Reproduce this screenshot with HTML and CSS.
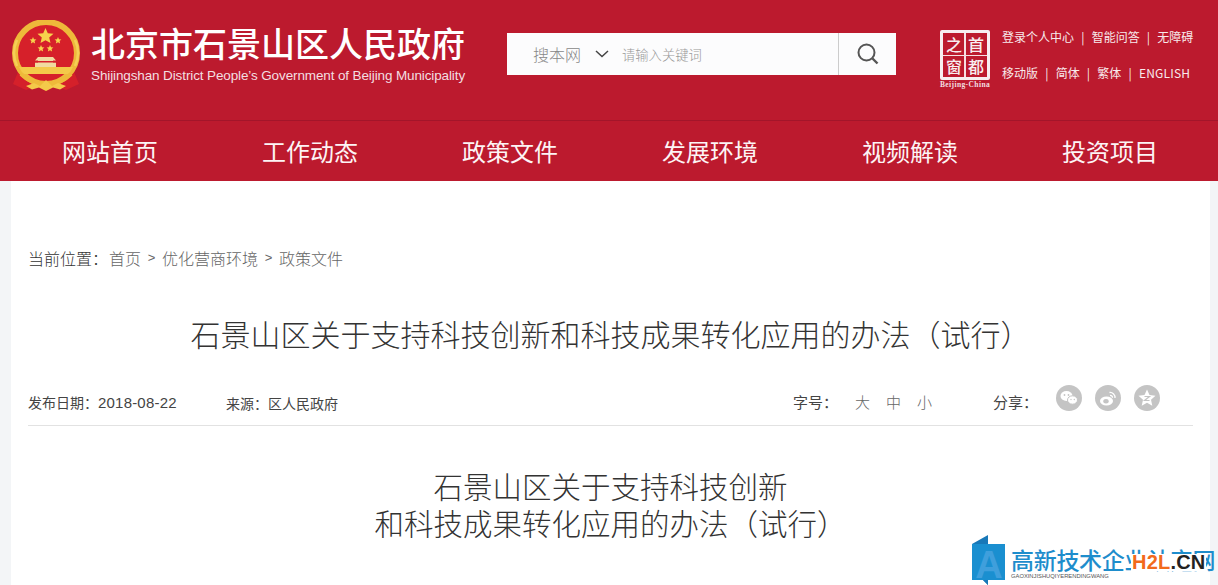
FILE: index.html
```html
<!DOCTYPE html>
<html lang="zh-CN">
<head>
<meta charset="utf-8">
<title>石景山区关于支持科技创新和科技成果转化应用的办法（试行）</title>
<link rel="stylesheet" href="styles.css">
</head>
<body>
<header class="band">
  <div class="masthead">
    <div class="brand">
      <svg class="emblem" viewBox="0 0 68 72" width="68" height="72" aria-hidden="true">
        <path d="M6 52 L1 64 L14 70 L24 66 L34 71 L44 66 L54 70 L67 64 L62 52 Z" fill="#d5202a"/>
        <circle cx="34" cy="33" r="31" fill="#d6202a" stroke="#eeb93a" stroke-width="6"/>
        <path d="M5 20a31 31 0 0 0 0 26" fill="none" stroke="#f5cf57" stroke-width="2.5"/>
        <path d="M63 20a31 31 0 0 1 0 26" fill="none" stroke="#f5cf57" stroke-width="2.500"/>
        <polygon points="33.5,8 35.8,13.2 41.5,13.8 37.2,17.5 38.5,23 33.5,20.2 28.5,23 29.8,17.5 25.5,13.8 31.2,13.2" fill="#f7d24c"/>
        <polygon points="21,17 22,19.3 24.4,19.5 22.6,21.1 23.1,23.5 21,22.3 18.9,23.5 19.4,21.1 17.6,19.5 20,19.3" fill="#f7d24c"/>
        <polygon points="46,17 47,19.3 49.4,19.5 47.6,21.1 48.1,23.5 46,22.3 43.9,23.5 44.4,21.1 42.6,19.5 45,19.3" fill="#f7d24c"/>
        <polygon points="29,25 30,27.3 32.4,27.5 30.6,29.1 31.1,31.5 29,30.3 26.9,31.5 27.4,29.1 25.6,27.5 28,27.3" fill="#f7d24c"/>
        <polygon points="38,25 39,27.3 41.4,27.5 39.600,29.1 40.1,31.5 38,30.3 35.9,31.5 36.4,29.1 34.6,27.5 37,27.3" fill="#f7d24c"/>
        <path d="M26 37h15l3 3.500h-3v2h3v4.500H23v-4.500h3v-2h-3z" fill="#f1dba0"/>
        <path d="M23 41h21v1.500H23z" fill="#d6202a"/>
        <path d="M7 47h54l-4 7H11z" fill="#f4c94a"/>
        <path d="M9 54c8 8 16 10 25 10s17-2 25-10" fill="none" stroke="#eeb93a" stroke-width="4"/>
        <path d="M14 66l8-3 6 3 6-6 6 6 6-3 8 3-6 3.500-7-2-7 3.500-7-3.500-7 2z" fill="#f4c94a"/>
      </svg>
      <div class="brand-text">
        <div class="brand-cn">北京市石景山区人民政府</div>
        <div class="brand-en">Shijingshan District People’s Government of Beijing Municipality</div>
      </div>
    </div>
    <form class="search">
      <div class="search-scope">搜本网
        <svg class="chevron" viewBox="0 0 14 8" width="14" height="8" aria-hidden="true"><path d="M1 1l6 5.500L13 1" fill="none" stroke="#444" stroke-width="1.500"/></svg>
      </div>
      <div class="search-input">请输入关键词</div>
      <div class="search-button">
        <svg viewBox="0 0 24 24" width="24" height="24" aria-hidden="true"><circle cx="10.500" cy="10.500" r="8" fill="none" stroke="#555" stroke-width="2"/><path d="M16.500 16.500l5 5" stroke="#555" stroke-width="2.400"/></svg>
      </div>
    </form>
    <div class="stamp-wrap">
      <div class="stamp">
        <span>之</span><span>首</span><span>窗</span><span>都</span>
      </div>
      <div class="stamp-en">Beijing-China</div>
    </div>
    <div class="toplinks">
      <div class="toplinks-row"><span>登录个人中心</span><i>|</i><span>智能问答</span><i>|</i><span>无障碍</span></div>
      <div class="toplinks-row"><span>移动版</span><i>|</i><span>简体</span><i>|</i><span>繁体</span><i>|</i><span class="latin">ENGLISH</span></div>
    </div>
  </div>
  <nav class="nav">
    <a>网站首页</a><a>工作动态</a><a>政策文件</a><a>发展环境</a><a>视频解读</a><a>投资项目</a>
  </nav>
</header>

<main class="card">
  <div class="crumbs">
    <span class="crumb-label">当前位置：</span><a>首页</a><span class="sep">&gt;</span><a>优化营商环境</a><span class="sep">&gt;</span><a>政策文件</a>
  </div>
  <h1 class="title">石景山区关于支持科技创新和科技成果转化应用的办法（试行）</h1>
  <div class="meta">
    <div class="meta-date">发布日期：<span class="date-num">2018-08-22</span></div>
    <div class="meta-source">来源：区人民政府</div>
    <div class="meta-size"><span class="meta-label">字号：</span><a>大</a><a>中</a><a>小</a></div>
    <div class="meta-share">
      <span class="meta-label">分享：</span>
      <svg class="share" viewBox="0 0 26 26" width="26" height="26" aria-hidden="true"><circle cx="13" cy="13" r="13" fill="#c4c4c4"/><ellipse cx="10.500" cy="11" rx="6" ry="5" fill="#fff"/><ellipse cx="16.500" cy="15" rx="5" ry="4.200" fill="#fff" stroke="#c4c4c4"/><circle cx="8.500" cy="10" r=".9" fill="#c4c4c4"/><circle cx="12.500" cy="10" r=".9" fill="#c4c4c4"/><circle cx="15" cy="14.500" r=".7" fill="#c4c4c4"/><circle cx="18.300" cy="14.500" r=".7" fill="#c4c4c4"/></svg>
      <svg class="share" viewBox="0 0 26 26" width="26" height="26" aria-hidden="true"><circle cx="13" cy="13" r="13" fill="#c4c4c4"/><ellipse cx="11.500" cy="16" rx="6.500" ry="4.600" fill="#fff"/><ellipse cx="11" cy="16.300" rx="2.700" ry="2.200" fill="#c4c4c4"/><path d="M14.500 7.500a5 5 0 0 1 5.500 5.500M15 10.300a2.300 2.300 0 0 1 2.500 2.500" fill="none" stroke="#fff" stroke-width="1.300"/></svg>
      <svg class="share" viewBox="0 0 26 26" width="26" height="26" aria-hidden="true"><circle cx="13" cy="13" r="13" fill="#c4c4c4"/><polygon points="13,4.500 15.500,10 21.500,10.700 17,14.700 18.300,20.700 13,17.700 7.700,20.700 9,14.700 4.500,10.700 10.500,10" fill="#fff"/><path d="M10.500 11.500h5l-5 4h5" fill="none" stroke="#c4c4c4" stroke-width="1.200"/></svg>
    </div>
  </div>
  <h2 class="doc-title">石景山区关于支持科技创新<br>和科技成果转化应用的办法（试行）</h2>
</main>

<aside class="watermark">
  <svg class="wm-logo" viewBox="0 0 34 50" width="34" height="50" aria-hidden="true">
    <path d="M1 9L17 0v50L12 45H1z" fill="#1878b8"/>
    <path d="M1 9h33v36H1z" fill="#1a8fd0"/>
    <path d="M17 45v5l-5-5z" fill="#1878b8"/>
  </svg>
  <span class="wm-letter">A</span>
  <div class="wm-text">
    <div class="wm-cn">高新技术企业认定网</div>
    <div class="wm-en">GAOXINJISHUQIYERENDINGWANG</div>
  </div>
  <div class="wm-h2l"><span class="wm-orange">H2L</span><span class="wm-dark">.CN</span></div>
</aside>
</body>
</html>
```
FILE: styles.css
```css
* { box-sizing: border-box; }
html, body { margin: 0; height: 585px; overflow: hidden; }
body {
  position: relative;
  background: #f3f5f7;
  color: #333;
  font-family: "Noto Sans CJK SC", "Liberation Sans", sans-serif;
}
a { color: inherit; text-decoration: none; }

.band { background: #bc1a2e; color: #fff; }
.masthead {
  height: 121px;
  border-bottom: 1px solid #a3152a;
  display: flex;
  align-items: flex-start;
}
.brand { display: flex; margin-left: 12px; padding-top: 20px; width: 495px; }
.emblem { flex: none; }
.brand-text { margin-left: 11px; }
.brand-cn { font-size: 34px; line-height: 48px; margin-top: -1px; font-weight: 500; white-space: nowrap; }
.brand-en { font-family: "Liberation Sans", sans-serif; font-size: 13.5px; line-height: 16px; margin-top: 1px; color: #f3dfe1; white-space: nowrap; letter-spacing: -.12px; }

.search {
  margin-top: 33px;
  width: 389px;
  height: 42px;
  background: #fcfcfd;
  display: flex;
  align-items: center;
  flex: none;
}
.search-scope {
  width: 115px;
  padding-left: 26px;
  font-size: 16px;
  font-weight: 300;
  color: #888;
  display: flex;
  align-items: center;
  gap: 14px;
}
.search-input { flex: 1; font-size: 13.3px; font-weight: 300; color: #999; }
.search-button {
  width: 58px;
  height: 42px;
  border-left: 1px solid #ccc;
  display: flex;
  align-items: center;
  justify-content: center;
}

.stamp-wrap { margin: 30px 0 0 42px; width: 54px; flex: none; display: flex; flex-direction: column; align-items: center; }
.stamp {
  width: 50px;
  height: 50px;
  border: 3px solid #f7eef0;
  border-radius: 2px;
  display: grid;
  grid-template-columns: 1fr 1fr;
  grid-template-rows: 1fr 1fr;
  background:
    linear-gradient(#f7dfe2, #f7dfe2) center / 100% 1px no-repeat,
    linear-gradient(#f7dfe2, #f7dfe2) center / 2px 100% no-repeat;
}
.stamp span { font-size: 16px; line-height: 22px; text-align: center; color: #f8eef0; font-weight: 500; }
.stamp-en { font-family: "Liberation Serif", serif; font-weight: 700; font-size: 7.5px; line-height: 9px; letter-spacing: .4px; color: #f3dfe1; white-space: nowrap; }

.toplinks { margin: 28px 0 0 10px; font-size: 12px; line-height: 18px; white-space: nowrap; color: #f8eaec; }
.toplinks-row { display: flex; align-items: center; height: 18px; margin-bottom: 18px; }
.toplinks-row i { font-style: normal; margin: 0 7.2px; }
.latin { letter-spacing: .2px; }

.nav { display: grid; grid-template-columns: repeat(6, 200px); padding-left: 10px; height: 60px; }
.nav a { font-size: 24px; line-height: 59px; text-align: center; color: #fdf4f5; }

.card { margin: 0 8px 0 11px; background: #fff; padding: 0 17px; height: 404px; }
.crumbs { padding-top: 65px; font-size: 16px; line-height: 24px; color: #666; display: flex; font-weight: 300; }
.crumb-label { color: #333; width: 81px; }
.sep { font-family: "Liberation Sans", sans-serif; font-size: 13px; width: 21px; text-align: center; }
.title { margin: 43px 0 0; font-size: 30px; line-height: 40px; font-weight: 300; color: #333; text-align: center; }
.meta { height: 73px; border-bottom: 1px solid #e2e2e2; display: flex; align-items: flex-end; font-size: 14px; color: #444; padding-bottom: 11px; }
.meta-date { width: 198px; line-height: 22px; }
.date-num { font-family: "Liberation Sans", sans-serif; font-size: 15px; letter-spacing: .2px; }
.meta-source { width: 567px; line-height: 22px; }
.meta-size { width: 200px; display: flex; font-size: 15px; line-height: 24px; font-weight: 300; }
.meta-label { width: 62px; font-weight: 400; }
.meta-size a { width: 31px; color: #666; }
.meta-share { display: flex; align-items: center; gap: 13px; font-size: 15px; line-height: 24px; margin-bottom: -1px; }
.meta-share .meta-label { width: 50px; }
.share { flex: none; position: relative; top: -4px; }

.doc-title { margin: 41px 0 0; font-size: 29.5px; line-height: 37px; font-weight: 300; color: #333; text-align: center; }

.watermark { position: absolute; left: 971px; top: 535px; width: 247px; height: 50px; }
.wm-logo { position: absolute; left: 0; top: 0; }
.wm-letter { position: absolute; left: 3px; top: 11px; width: 30px; text-align: center; font-family: "Liberation Sans", sans-serif; font-weight: 700; font-size: 38px; line-height: 38px; color: #3f9fdc; }
.wm-text { position: absolute; left: 40px; top: 11px; }
.wm-cn { font-size: 23px; line-height: 26px; font-weight: 500; color: #1e8dcc; white-space: nowrap; letter-spacing: -.3px; }
.wm-en { font-family: "Liberation Sans", sans-serif; font-size: 5.8px; line-height: 8px; color: #555; white-space: nowrap; }
.wm-h2l { position: absolute; left: 160px; top: 19px; padding: 0 1px; height: 17px; background: #fff; font-family: "Liberation Sans", sans-serif; font-weight: 700; font-size: 20px; line-height: 17px; white-space: nowrap; letter-spacing: .2px; }
.wm-orange { color: #f26a1b; }
.wm-dark { color: #222; }
```
